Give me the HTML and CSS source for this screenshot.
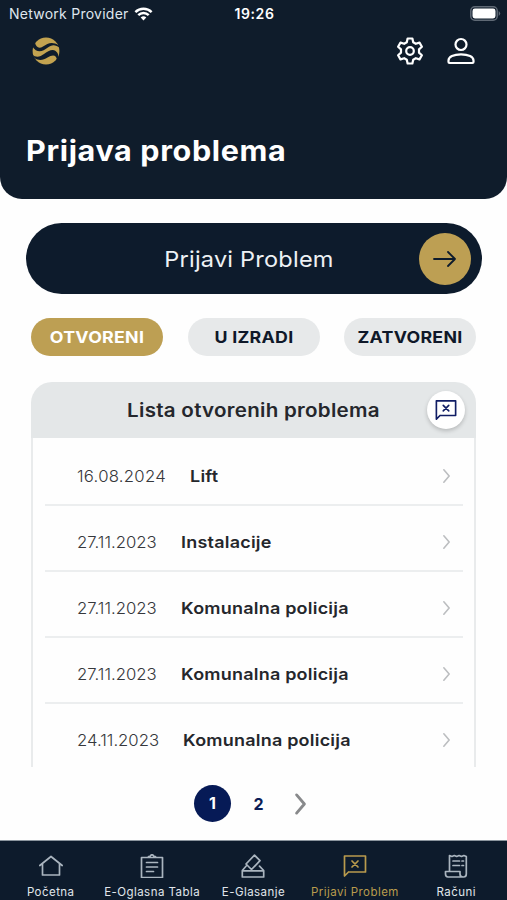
FILE: index.html
```html
<!DOCTYPE html>
<html lang="sr-Latn">
<head>
<meta charset="utf-8">
<meta name="viewport" content="width=device-width, initial-scale=1">
<title>Prijava problema</title>
<link rel="stylesheet" href="styles.css">
</head>
<body>
<svg class="sprite" aria-hidden="true">
  <symbol id="chevron" viewBox="0 0 10 18"><path d="M2 2 8 9 2 16"/></symbol>
  <symbol id="note" viewBox="0 0 24 24"><path d="M1.500 22V2h21v16H5.500zM1.500 22 5.500 18"/><path d="m9 7 6 6m0-6-6 6"/></symbol>
</svg>
<header class="header">
  <div class="status">
    <div class="carrier"><span>Network Provider</span>
      <svg class="wifi" viewBox="0 0 20 15"><path d="M1.300 5.500a12.300 12.300 0 0 1 17.400 0M4.400 8.800a7.900 7.900 0 0 1 11.200 0"/><path class="dot" d="M7 11.300a4.300 4.300 0 0 1 6 0L10 14.500z"/></svg>
    </div>
    <time class="clock">19:26</time>
    <svg class="battery" viewBox="0 0 31 15"><rect class="case" x=".8" y=".8" width="26.400" height="13.400" rx="4"/><rect class="charge" x="2.500" y="2.500" width="23" height="10" rx="2.400"/><path class="cap" d="M28.700 5q3 2.500 0 5z"/></svg>
  </div>
  <div class="toolbar">
    <svg class="logo" viewBox="0 0 28 28"><circle cx="14" cy="14" r="13.400"/><path class="cut" d="M3 5.500C4 10.500 7 12 11 9.500c5-3.200 9-5.500 16-1L28 11c-5-4-8.500-3.300-12.500-.3C11 14 5.500 17.500 0 9z"/><path class="cut" d="M0 17.500c4.500 3.500 8 2.300 12-.5 4.500-3.200 10-6.700 13.500-1 1.200 2.500 1 4.500-.5 7.500-.3-6-4.500-6.200-9.500-3-4 2.600-8.500 3.700-13 .5z"/></svg>
    <div class="tools">
      <svg class="gear" viewBox="0 0 28 28"><path d="M11.600 1.500h4.800l.8 3.800 2.600 1.500 3.700-1.200 2.400 4.100-2.900 2.700v3.200l2.900 2.700-2.400 4.100-3.700-1.200-2.600 1.500-.8 3.800h-4.800l-.8-3.800-2.600-1.500-3.700 1.200-2.400-4.100L5 15.600v-3.200L2.100 9.700l2.400-4.100 3.700 1.200 2.600-1.500z"/><circle cx="14" cy="14" r="3.800"/></svg>
      <svg class="person" viewBox="0 0 28 28"><circle cx="14" cy="7.500" r="5.500"/><path d="M1.500 25v-1.500c0-3.500 5-6.200 12.500-6.200s12.500 2.700 12.500 6.200V25q0 1-1 1h-23q-1 0-1-1z"/></svg>
    </div>
  </div>
  <h1 class="title">Prijava problema</h1>
</header>
<main class="main">
  <button class="report"><span class="report-label">Prijavi Problem</span>
    <span class="report-arrow"><svg viewBox="0 0 24 18"><path d="M1 9h21M15 2l7 7-7 7"/></svg></span>
  </button>
  <div class="filters">
    <button class="filter active"><span>OTVORENI</span></button>
    <button class="filter"><span>U IZRADI</span></button>
    <button class="filter"><span>ZATVORENI</span></button>
  </div>
  <section class="card">
    <div class="card-head"><h2 class="card-title">Lista otvorenih problema</h2>
      <span class="badge"><svg><use href="#note"/></svg></span>
    </div>
    <ul class="list">
      <li class="row"><span class="date date-a">16.08.2024</span><span class="name">Lift</span><svg class="go"><use href="#chevron"/></svg></li>
      <li class="row"><span class="date">27.11.2023</span><span class="name">Instalacije</span><svg class="go"><use href="#chevron"/></svg></li>
      <li class="row"><span class="date">27.11.2023</span><span class="name">Komunalna policija</span><svg class="go"><use href="#chevron"/></svg></li>
      <li class="row"><span class="date">27.11.2023</span><span class="name">Komunalna policija</span><svg class="go"><use href="#chevron"/></svg></li>
      <li class="row"><span class="date date-c">24.11.2023</span><span class="name">Komunalna policija</span><svg class="go"><use href="#chevron"/></svg></li>
    </ul>
  </section>
  <nav class="pager"><span class="page current">1</span><span class="page">2</span><svg class="next"><use href="#chevron"/></svg></nav>
</main>
<nav class="tabs">
  <a class="tab"><svg viewBox="0 0 24 24"><path d="M.8 11.500 12 2.500l11.200 9M3.500 9.500V21h17V9.500"/></svg><span>Početna</span></a>
  <a class="tab"><svg viewBox="0 0 24 24"><path d="M1.500 3.500h21v20h-21zM8.500 3.500v-1H10q.5-1.700 2-1.700t2 1.700h1.500v1M6.500 8.500h11M6.500 13h11M6.500 17.500h7"/></svg><span>E-Oglasna Tabla</span></a>
  <a class="tab"><svg viewBox="0 0 24 24"><path d="M13.500 1.200 19 6.700 10.500 15.500 5 10zM5 12.200 1.300 16.500v6.500h21.400v-6.500L18.500 12.200M1.300 16.800h21.400"/></svg><span>E-Glasanje</span></a>
  <a class="tab selected"><svg><use href="#note"/></svg><span>Prijavi Problem</span></a>
  <a class="tab"><svg viewBox="0 0 24 24"><path d="M5.500 17V1.500l2.400 1 2.400-1 2.400 1 2.400-1 2.400 1 2.400-1 2.400 1V20q0 3-2.800 3H4q-2.500 0-2.500-3v-2.500H16V20q0 3 3 3M9 7h6.500M9 11.500h6.500M18 7h1.500M18 11.500h1.500"/></svg><span>Računi</span></a>
</nav>
</body>
</html>
```

FILE: styles.css
```css
* { box-sizing: border-box; }
html { background: #0d1b2c; }
body { margin: 0; width: 507px; height: 900px; overflow: hidden; display: flex; flex-direction: column; background: #fefefe; font-family: Inter, "Open Sans", sans-serif; color: #25272c; }
h1, h2, ul { margin: 0; padding: 0; }
button { border: 0; margin: 0; padding: 0; font: inherit; color: inherit; }
svg { display: block; fill: none; stroke: currentColor; stroke-linecap: round; stroke-linejoin: round; flex-shrink: 0; }
.sprite { position: absolute; width: 0; height: 0; }
.header { height: 199px; flex-shrink: 0; background: #0f1c2b; border-radius: 0 0 22px 22px; color: #fff; }
.status { height: 27px; padding: 0 6px 0 9px; display: grid; grid-template-columns: 1fr auto 1fr; align-items: center; }
.carrier { display: flex; align-items: center; gap: 5px; font-size: 14px; letter-spacing: .25px; color: #dfe6ee; white-space: nowrap; }
.wifi { width: 19px; height: 14px; stroke-width: 2.600; stroke-linecap: butt; color: #fff; }
.wifi .dot { fill: currentColor; stroke: none; }
.clock { font-size: 14px; font-weight: 600; letter-spacing: .6px; margin-right: 1px; }
.battery { width: 31px; height: 15px; justify-self: end; }
.case { stroke: #5f6975; stroke-width: 1.500; }
.charge { fill: #fff; stroke: none; }
.cap { fill: #5f6975; stroke: none; }
.toolbar { height: 48px; padding: 0 32px; display: flex; justify-content: space-between; align-items: center; }
.logo { width: 28px; height: 28px; fill: #c3a350; stroke: none; }
.logo .cut { fill: #0f1c2b; }
.tools { display: flex; gap: 23px; }
.gear, .person { width: 28px; height: 28px; stroke-width: 2.200; }
.title { width: fit-content; margin: 57px 0 0 26px; font-size: 28px; line-height: 38px; font-weight: 700; letter-spacing: .6px; white-space: nowrap; transform: scaleX(1.09); transform-origin: left; }
.main { flex: 1; display: flex; flex-direction: column; align-items: center; padding-top: 24px; }
.report { width: 456px; height: 71px; border-radius: 36px; background: #0d1b2c; color: #edf1f4; display: grid; grid-template-columns: 1fr 52px; align-items: center; padding: 0 11px 0 53px; }
.report-label { font-size: 22px; letter-spacing: .2px; transform: scaleX(1.07); }
.report-arrow { width: 52px; height: 52px; border-radius: 50%; background: #bd9f53; color: #0d1b2c; display: grid; place-items: center; }
.report-arrow svg { width: 24px; height: 18px; stroke-width: 1.800; }
.filters { width: 445px; display: flex; justify-content: space-between; margin-top: 24px; }
.filter { width: 132px; height: 38px; border-radius: 19px; background: #e7e9ea; color: #0f1829; font-size: 16px; font-weight: 700; letter-spacing: .25px; }
.filter span { display: block; transform: scaleX(1.11); }
.filter.active { background: #bd9f53; color: #fff; }
.card { width: 445px; margin-top: 26px; }
.card-head { height: 56px; border-radius: 21px 21px 0 0; background: #e4e7e8; display: grid; grid-template-columns: 1fr 38px; align-items: center; padding: 0 11px 0 49px; }
.card-title { text-align: center; font-size: 18.500px; font-weight: 600; letter-spacing: .25px; transform: scaleX(1.11); }
.badge { width: 38px; height: 38px; border-radius: 50%; background: #fff; color: #101d65; display: grid; place-items: center; box-shadow: 0 2px 4px #0003; }
.badge svg { width: 22px; height: 22px; stroke-width: 1.800; }
.list { height: 329px; list-style: none; padding: 2px 11px 0 12px; border: solid #e9ebec; border-width: 0 2px; }
.row { height: 66px; display: flex; align-items: center; padding: 7px 12px 0 32px; border-bottom: 2px solid #eceeef; }
.row:last-child { border: 0; height: 64px; }
.date { width: 104px; font-size: 16px; font-weight: 300; color: #36383c; transform: scaleX(1.045); transform-origin: left; }
.date-a { width: 113px; letter-spacing: .25px; }
.date-c { width: 106px; }
.name { font-size: 16.500px; font-weight: 600; letter-spacing: .2px; white-space: nowrap; transform: scaleX(1.09); transform-origin: left; }
.go { width: 9px; height: 16px; margin-left: auto; color: #bcbec0; stroke-width: 1.800; }
.pager { display: flex; align-items: center; align-self: flex-start; margin: 18px 0 0 194px; color: #0b1d56; font-size: 16px; font-weight: 700; }
.page { width: 55px; text-align: center; }
.page.current { width: 37px; height: 37px; line-height: 37px; border-radius: 50%; background: #061a56; color: #fff; }
.next { width: 13px; height: 24px; margin-left: 8px; color: #88898b; stroke-width: 2.200; }
.tabs { height: 60px; flex-shrink: 0; background: #0d1b2c; border-top: 1px solid #8b959e; display: grid; grid-template-columns: repeat(5, 1fr); color: #e0e6eb; }
.tab { display: flex; flex-direction: column; align-items: center; padding-top: 13px; gap: 7px; font-size: 11.500px; line-height: 15px; letter-spacing: .45px; white-space: nowrap; }
.tab svg { width: 24px; height: 24px; stroke-width: 1.700; color: #aab5bf; }
.tab.selected, .tab.selected svg { color: #b99b4d; }
```
